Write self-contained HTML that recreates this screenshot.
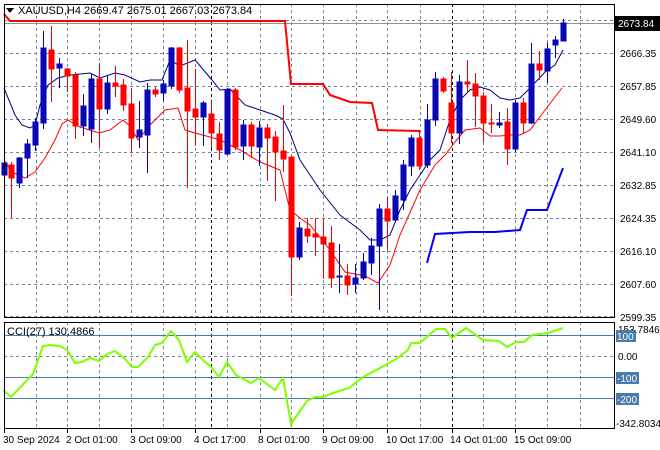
<!DOCTYPE html>
<html><head><meta charset="utf-8"><style>
html,body{margin:0;padding:0;background:#fff;width:660px;height:450px;overflow:hidden}
svg{display:block}
text{font-family:"Liberation Sans",sans-serif;font-size:10px;fill:#000}
</style></head><body>
<svg width="660" height="450" viewBox="0 0 660 450" xmlns="http://www.w3.org/2000/svg" shape-rendering="crispEdges">
<g stroke="#7a8594" stroke-dasharray="3,3" stroke-width="1">
<line x1="4" y1="20.5" x2="614" y2="20.5"/>
<line x1="4" y1="53.5" x2="614" y2="53.5"/><line x1="4" y1="86.5" x2="614" y2="86.5"/>
<line x1="4" y1="119.5" x2="614" y2="119.5"/><line x1="4" y1="152.5" x2="614" y2="152.5"/>
<line x1="4" y1="185.5" x2="614" y2="185.5"/><line x1="4" y1="218.5" x2="614" y2="218.5"/>
<line x1="4" y1="251.5" x2="614" y2="251.5"/><line x1="4" y1="284.5" x2="614" y2="284.5"/>
<line x1="4" y1="316.5" x2="614" y2="316.5"/>
<line x1="4" y1="356.5" x2="614" y2="356.5"/>
<line x1="36.5" y1="4" x2="36.5" y2="429"/><line x1="67.5" y1="4" x2="67.5" y2="429"/>
<line x1="99.5" y1="4" x2="99.5" y2="429"/><line x1="131.5" y1="4" x2="131.5" y2="429"/>
<line x1="163.5" y1="4" x2="163.5" y2="429"/><line x1="195.5" y1="4" x2="195.5" y2="429"/>
<line x1="227.5" y1="4" x2="227.5" y2="429"/><line x1="260.5" y1="4" x2="260.5" y2="429"/>
<line x1="291.5" y1="4" x2="291.5" y2="429"/><line x1="323.5" y1="4" x2="323.5" y2="429"/>
<line x1="356.5" y1="4" x2="356.5" y2="429"/><line x1="387.5" y1="4" x2="387.5" y2="429"/>
<line x1="420.5" y1="4" x2="420.5" y2="429"/><line x1="483.5" y1="4" x2="483.5" y2="429"/>
<line x1="515.5" y1="4" x2="515.5" y2="429"/><line x1="547.5" y1="4" x2="547.5" y2="429"/>
<line x1="580.5" y1="4" x2="580.5" y2="429"/>
</g>
<g stroke="#000" stroke-dasharray="3,3">
<line x1="211.5" y1="4" x2="211.5" y2="429"/><line x1="452.5" y1="4" x2="452.5" y2="429"/>
</g>
<rect x="0" y="318" width="620" height="4" fill="#fff"/>
<line x1="4" y1="23.5" x2="614" y2="23.5" stroke="#8a939c"/>
<g stroke="#4a7aa8"><line x1="4" y1="335.5" x2="614" y2="335.5"/><line x1="4" y1="377.5" x2="614" y2="377.5"/><line x1="4" y1="398.5" x2="614" y2="398.5"/></g>

<g shape-rendering="auto" fill="none">
<polyline stroke="#ff0000" stroke-width="2" points="4,14 10,21 285,21 291,84 323,84 330,95 350,102 372,103 378,130 420,131"/>
<polyline stroke="#0000ff" stroke-width="2" points="427,263 435,234 470,232 495,232 520,230 527,210 547,210 563,168"/>
<polyline stroke="#000080" stroke-width="1" points="4,88 15,115 22,125 30,128 35,125 40,105 48,85 58,78 70,75 90,73 100,78 115,73 125,75 140,82 150,80 162,80 170,60 180,66 195,60 212,80 220,90 230,89 245,105 260,110 275,115 283,119 290,133 300,160 320,190 340,215 360,230 370,240 380,240 390,235 400,210 410,190 420,175 430,160 440,150 450,120 460,100 470,90 480,87 490,90 500,98 510,100 520,98 530,88 545,72 555,65 563,50"/>
<polyline stroke="#ff0000" stroke-width="1" points="4,160 12,172 25,178 35,172 45,158 55,140 62,124 68,120 80,127 99,133 110,130 123,120 130,126 138,140 150,125 165,110 178,108 185,130 195,133 210,137 220,140 240,150 260,162 280,170 290,210 300,218 310,225 330,250 345,272 365,276 378,283 390,265 400,235 420,190 435,165 445,155 455,142 465,130 480,128 490,136 500,136 510,135 520,135 530,130 545,110 562,88"/>
</g>

<g>
<g stroke="#0000c0" fill="#0a0ab0">
<line x1="4.5" y1="150" x2="4.5" y2="200"/><rect x="2" y="163" width="5" height="12"/>
<line x1="19.5" y1="157" x2="19.5" y2="188"/><rect x="17" y="158" width="5" height="25"/>
<line x1="27.5" y1="139" x2="27.5" y2="178"/><rect x="25" y="144" width="5" height="14"/>
<line x1="35.5" y1="118" x2="35.5" y2="151"/><rect x="33" y="122" width="5" height="23"/>
<line x1="43.5" y1="31" x2="43.5" y2="129"/><rect x="41" y="48" width="5" height="75"/>
<line x1="59.5" y1="58" x2="59.5" y2="88"/><rect x="57" y="64" width="5" height="4"/>
<line x1="83.5" y1="94" x2="83.5" y2="136"/><rect x="81" y="106" width="5" height="20"/>
<line x1="91.5" y1="74" x2="91.5" y2="143"/><rect x="89" y="79" width="5" height="50"/>
<line x1="107.5" y1="76" x2="107.5" y2="114"/><rect x="105" y="83" width="5" height="26"/>
<line x1="139.5" y1="101" x2="139.5" y2="148"/><rect x="137" y="130" width="5" height="7"/>
<line x1="147.5" y1="83" x2="147.5" y2="173"/><rect x="145" y="90" width="5" height="45"/>
<line x1="163.5" y1="80" x2="163.5" y2="101"/><rect x="161" y="84" width="5" height="9"/>
<line x1="171.5" y1="47" x2="171.5" y2="89"/><rect x="169" y="48" width="5" height="38"/>
<line x1="203.5" y1="101" x2="203.5" y2="146"/><rect x="201" y="103" width="5" height="14"/>
<line x1="227.5" y1="88" x2="227.5" y2="155"/><rect x="225" y="90" width="5" height="64"/>
<line x1="243.5" y1="120" x2="243.5" y2="160"/><rect x="241" y="125" width="5" height="21"/>
<line x1="259.5" y1="121" x2="259.5" y2="166"/><rect x="257" y="128" width="5" height="19"/>
<line x1="299.5" y1="222" x2="299.5" y2="260"/><rect x="297" y="228" width="5" height="29"/>
<line x1="339.5" y1="244" x2="339.5" y2="293"/><rect x="337" y="276" width="5" height="1"/>
<line x1="355.5" y1="264" x2="355.5" y2="293"/><rect x="353" y="278" width="5" height="6"/>
<line x1="363.5" y1="253" x2="363.5" y2="280"/><rect x="361" y="262" width="5" height="16"/>
<line x1="371.5" y1="238" x2="371.5" y2="275"/><rect x="369" y="246" width="5" height="17"/>
<line x1="379.5" y1="204" x2="379.5" y2="310"/><rect x="377" y="209" width="5" height="37"/>
<line x1="395.5" y1="190" x2="395.5" y2="222"/><rect x="393" y="196" width="5" height="24"/>
<line x1="403.5" y1="160" x2="403.5" y2="210"/><rect x="401" y="165" width="5" height="35"/>
<line x1="411.5" y1="135" x2="411.5" y2="176"/><rect x="409" y="138" width="5" height="28"/>
<line x1="427.5" y1="104" x2="427.5" y2="168"/><rect x="425" y="120" width="5" height="45"/>
<line x1="435.5" y1="72" x2="435.5" y2="126"/><rect x="433" y="79" width="5" height="41"/>
<line x1="459.5" y1="75" x2="459.5" y2="144"/><rect x="457" y="82" width="5" height="51"/>
<line x1="499.5" y1="112" x2="499.5" y2="128"/><rect x="497" y="123" width="5" height="2"/>
<line x1="515.5" y1="100" x2="515.5" y2="152"/><rect x="513" y="103" width="5" height="46"/>
<line x1="531.5" y1="43" x2="531.5" y2="124"/><rect x="529" y="64" width="5" height="59"/>
<line x1="547.5" y1="43" x2="547.5" y2="83"/><rect x="545" y="49" width="5" height="22"/>
<line x1="555.5" y1="36" x2="555.5" y2="58"/><rect x="553" y="40" width="5" height="5"/>
<line x1="563.5" y1="19" x2="563.5" y2="41"/><rect x="561" y="23" width="5" height="18"/>
</g>
<g stroke="#ff0000" fill="#ff0000">
<line x1="11.5" y1="162" x2="11.5" y2="218"/><rect x="9" y="165" width="5" height="13"/>
<line x1="51.5" y1="26" x2="51.5" y2="102"/><rect x="49" y="50" width="5" height="19"/>
<line x1="67.5" y1="68" x2="67.5" y2="92"/><rect x="65" y="69" width="5" height="7"/>
<line x1="75.5" y1="72" x2="75.5" y2="139"/><rect x="73" y="75" width="5" height="51"/>
<line x1="99.5" y1="63" x2="99.5" y2="148"/><rect x="97" y="79" width="5" height="30"/>
<line x1="115.5" y1="66" x2="115.5" y2="97"/><rect x="113" y="83" width="5" height="3"/>
<line x1="123.5" y1="79" x2="123.5" y2="111"/><rect x="121" y="85" width="5" height="20"/>
<line x1="131.5" y1="88" x2="131.5" y2="153"/><rect x="129" y="104" width="5" height="34"/>
<line x1="155.5" y1="87" x2="155.5" y2="97"/><rect x="153" y="90" width="5" height="4"/>
<line x1="179.5" y1="47" x2="179.5" y2="93"/><rect x="177" y="48" width="5" height="42"/>
<line x1="187.5" y1="40" x2="187.5" y2="188"/><rect x="185" y="88" width="5" height="23"/>
<line x1="195.5" y1="69" x2="195.5" y2="146"/><rect x="193" y="109" width="5" height="8"/>
<line x1="211.5" y1="101" x2="211.5" y2="148"/><rect x="209" y="114" width="5" height="19"/>
<line x1="219.5" y1="122" x2="219.5" y2="160"/><rect x="217" y="134" width="5" height="16"/>
<line x1="235.5" y1="88" x2="235.5" y2="150"/><rect x="233" y="90" width="5" height="57"/>
<line x1="251.5" y1="122" x2="251.5" y2="158"/><rect x="249" y="125" width="5" height="21"/>
<line x1="267.5" y1="124" x2="267.5" y2="181"/><rect x="265" y="128" width="5" height="10"/>
<line x1="275.5" y1="131" x2="275.5" y2="201"/><rect x="273" y="137" width="5" height="15"/>
<line x1="283.5" y1="105" x2="283.5" y2="172"/><rect x="281" y="151" width="5" height="8"/>
<line x1="291.5" y1="157" x2="291.5" y2="296"/><rect x="289" y="157" width="5" height="100"/>
<line x1="307.5" y1="218" x2="307.5" y2="243"/><rect x="305" y="229" width="5" height="7"/>
<line x1="315.5" y1="218" x2="315.5" y2="256"/><rect x="313" y="234" width="5" height="3"/>
<line x1="323.5" y1="218" x2="323.5" y2="279"/><rect x="321" y="237" width="5" height="7"/>
<line x1="331.5" y1="226" x2="331.5" y2="288"/><rect x="329" y="243" width="5" height="35"/>
<line x1="347.5" y1="264" x2="347.5" y2="295"/><rect x="345" y="276" width="5" height="9"/>
<line x1="387.5" y1="197" x2="387.5" y2="250"/><rect x="385" y="209" width="5" height="12"/>
<line x1="419.5" y1="131" x2="419.5" y2="170"/><rect x="417" y="138" width="5" height="28"/>
<line x1="443.5" y1="77" x2="443.5" y2="93"/><rect x="441" y="79" width="5" height="12"/>
<line x1="451.5" y1="72" x2="451.5" y2="143"/><rect x="449" y="103" width="5" height="30"/>
<line x1="467.5" y1="60" x2="467.5" y2="93"/><rect x="465" y="82" width="5" height="2"/>
<line x1="475.5" y1="73" x2="475.5" y2="127"/><rect x="473" y="84" width="5" height="12"/>
<line x1="483.5" y1="92" x2="483.5" y2="142"/><rect x="481" y="96" width="5" height="27"/>
<line x1="491.5" y1="104" x2="491.5" y2="133"/><rect x="489" y="123" width="5" height="1"/>
<line x1="507.5" y1="108" x2="507.5" y2="165"/><rect x="505" y="122" width="5" height="27"/>
<line x1="523.5" y1="98" x2="523.5" y2="134"/><rect x="521" y="103" width="5" height="20"/>
<line x1="539.5" y1="51" x2="539.5" y2="80"/><rect x="537" y="64" width="5" height="6"/>
</g>
</g>

<polyline shape-rendering="auto" fill="none" stroke="#7fff00" stroke-width="2" points="3,390 11,397 33,374 43,346 50,345 60,346 67,350 75,363 82,362 90,358 99,361 107,354 115,351 125,359 132,367 138,367 148,357 155,345 162,343 171,331 179,340 187,362 195,352 203,360 211,367 219,377 227,362 236,375 251,383 259,378 275,390 283,378 291,424 300,411 307,401 315,397 323,397 333,393 349,388 363,377 380,368 396,359 408,350 411,343 420,343 436,329 445,329 452,338 466,328 483,340 499,341 507,347 516,342 524,342 532,335 548,333 563,328"/>

<rect x="4.5" y="4.5" width="610" height="313" fill="none" stroke="#000"/>
<rect x="4.5" y="322.5" width="610" height="106" fill="none" stroke="#000"/>

<polygon points="6,8 14,8 10,13" fill="#000"/>
<text x="18" y="14" style="font-size:11px">XAUUSD,H4  2669.47 2675.01 2667.03 2673.84</text>
<text x="7" y="335" style="font-size:11px">CCI(27) 130.4866</text>

<g>
<text x="620" y="57">2666.35</text><text x="620" y="90">2657.85</text>
<text x="620" y="123">2649.60</text><text x="620" y="156">2641.10</text>
<text x="620" y="189">2632.85</text><text x="620" y="222">2624.35</text>
<text x="620" y="255">2616.10</text><text x="620" y="288">2607.60</text>
<text x="620" y="321">2599.35</text>
</g>
<rect x="614" y="16" width="46" height="15" fill="#000"/>
<text x="618" y="27" style="fill:#fff">2673.84</text>

<text x="618" y="333">153.7846</text>
<rect x="616" y="330" width="20" height="12" fill="#4a7bab"/><text x="617" y="340" style="fill:#fff">100</text>
<text x="618" y="360">0.00</text>
<rect x="616" y="372" width="23" height="12" fill="#4a7bab"/><text x="617" y="382" style="fill:#fff">-100</text>
<rect x="616" y="393" width="23" height="12" fill="#4a7bab"/><text x="617" y="403" style="fill:#fff">-200</text>
<text x="616" y="427">-342.8034</text>

<g>
<text x="3" y="443">30 Sep 2024</text><text x="66" y="443">2 Oct 01:00</text>
<text x="130" y="443">3 Oct 09:00</text><text x="194" y="443">4 Oct 17:00</text>
<text x="258" y="443">8 Oct 01:00</text><text x="322" y="443">9 Oct 09:00</text>
<text x="386" y="443">10 Oct 17:00</text><text x="450" y="443">14 Oct 01:00</text>
<text x="514" y="443">15 Oct 09:00</text>
</g>
<g stroke="#000">
<line x1="4.5" y1="429" x2="4.5" y2="433"/><line x1="67.5" y1="429" x2="67.5" y2="433"/>
<line x1="131.5" y1="429" x2="131.5" y2="433"/><line x1="195.5" y1="429" x2="195.5" y2="433"/>
<line x1="260.5" y1="429" x2="260.5" y2="433"/><line x1="323.5" y1="429" x2="323.5" y2="433"/>
<line x1="387.5" y1="429" x2="387.5" y2="433"/><line x1="452.5" y1="429" x2="452.5" y2="433"/>
<line x1="515.5" y1="429" x2="515.5" y2="433"/>
</g>
</svg>
</body></html>
